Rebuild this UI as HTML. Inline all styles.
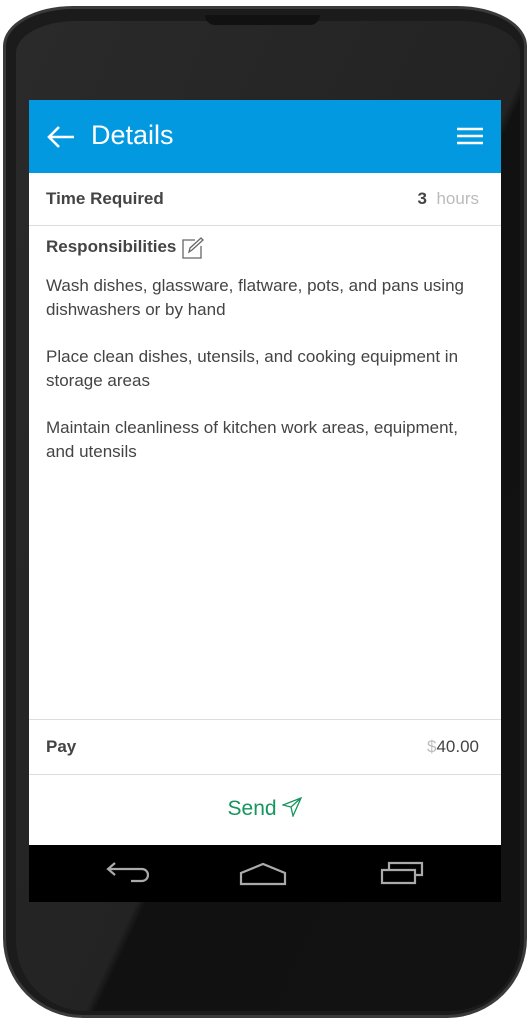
<!DOCTYPE html>
<html><head><meta charset="utf-8"><style>
*{margin:0;padding:0;box-sizing:border-box}
body{width:530px;height:1024px;background:#fff;position:relative;overflow:hidden;font-family:"Liberation Sans",sans-serif}
.phone{position:absolute;left:3px;top:6px;width:524px;height:1012px;border-radius:70px 70px 80px 80px / 40px 40px 80px 80px;background:#1b1b1b;border:3px solid #3a3a3a}
.inner{position:absolute;left:10px;top:12px;width:504px;height:990px;border-radius:60px 60px 70px 70px/32px 32px 70px 70px;background:linear-gradient(115deg,#2a2a2a 0%,#232323 55%,#111 56%,#121212 100%)}
.speaker{position:absolute;left:205px;top:15px;width:115px;height:10px;background:#111;border-radius:0 0 20px 20px}
.screen{position:absolute;left:29px;top:100px;width:472px;height:745px;background:#fff}
.hdr{height:73px;background:#0299e0;position:relative;color:#fff}
.hdr .t{position:absolute;left:62px;top:20px;font-size:27px}
.row{position:absolute;left:0;width:472px;border-bottom:1px solid #ddd}
.lbl{position:absolute;left:17px;font-size:17px;font-weight:bold;color:#444}
p{font-size:17px;color:#444;line-height:24px;margin:0 17px 23px 17px}
.nav{position:absolute;left:29px;top:845px;width:472px;height:57px;background:#000}
</style></head><body>
<div class="phone"><div class="inner"></div></div>
<div class="speaker"></div>
<div class="screen">
<div class="hdr">
<svg style="position:absolute;left:17px;top:24px" width="30" height="26" viewBox="0 0 30 26"><path d="M28 13H3M13 3L3 13l10 10" stroke="#fff" stroke-width="2.6" fill="none"/></svg>
<div class="t">Details</div>
<svg style="position:absolute;left:428px;top:27px" width="26" height="18"><path d="M0 2h26M0 9h26M0 16h26" stroke="#fff" stroke-width="2.5"/></svg>
</div>
<div class="row" style="top:73px;height:53px">
<div class="lbl" style="top:16px">Time Required</div>
<div style="position:absolute;right:22px;top:16px;font-size:17px;color:#444"><b>3</b>&nbsp;&nbsp;<span style="color:#bbb">hours</span></div>
</div>
<div class="lbl" style="top:137px">Responsibilities</div>
<svg style="position:absolute;left:153px;top:137px" width="22" height="22" viewBox="0 0 22 22"><path d="M13 3H1v18h18V9" stroke="#666" stroke-width="1.3" fill="none"/><path d="M7 15l1-4 11-10 2 2-11 10z" stroke="#666" stroke-width="1.3" fill="none"/></svg>
<div style="position:absolute;top:174px;left:0;width:472px">
<p>Wash dishes, glassware, flatware, pots, and pans using dishwashers or by hand</p>
<p>Place clean dishes, utensils, and cooking equipment in storage areas</p>
<p>Maintain cleanliness of kitchen work areas, equipment, and utensils</p>
</div>
<div class="row" style="top:619px;height:56px;border-top:1px solid #ddd">
<div class="lbl" style="top:17px">Pay</div>
<div style="position:absolute;right:22px;top:17px;font-size:17px;color:#444"><span style="color:#bbb">$</span>40.00</div>
</div>
<div style="position:absolute;top:697px;left:0;width:472px;text-align:center;color:#16955e;font-size:21px">Send <svg width="20" height="20" viewBox="0 0 20 20" style="vertical-align:-2px"><path d="M1 8L19 1 11 19 9 10z M9 10L19 1" stroke="#16955e" stroke-width="1.3" fill="none"/></svg></div>
</div>
<div class="nav">
<svg style="position:absolute;left:76px;top:16px" width="44" height="26" viewBox="0 0 44 26"><path d="M10 2L3 8l7 6M3 8h34a6 6 0 0 1 0 12H26" stroke="#aaa" stroke-width="2.2" fill="none"/></svg>
<svg style="position:absolute;left:210px;top:16px" width="48" height="26" viewBox="0 0 48 26"><path d="M2 23V12L24 3l22 9v11z" stroke="#aaa" stroke-width="2.2" fill="none"/></svg>
<svg style="position:absolute;left:350px;top:15px" width="46" height="26" viewBox="0 0 46 26"><path d="M3 10h33v13H3zM10 10V3h33v12h-7" stroke="#aaa" stroke-width="2.2" fill="none"/></svg>
</div>
</body></html>
